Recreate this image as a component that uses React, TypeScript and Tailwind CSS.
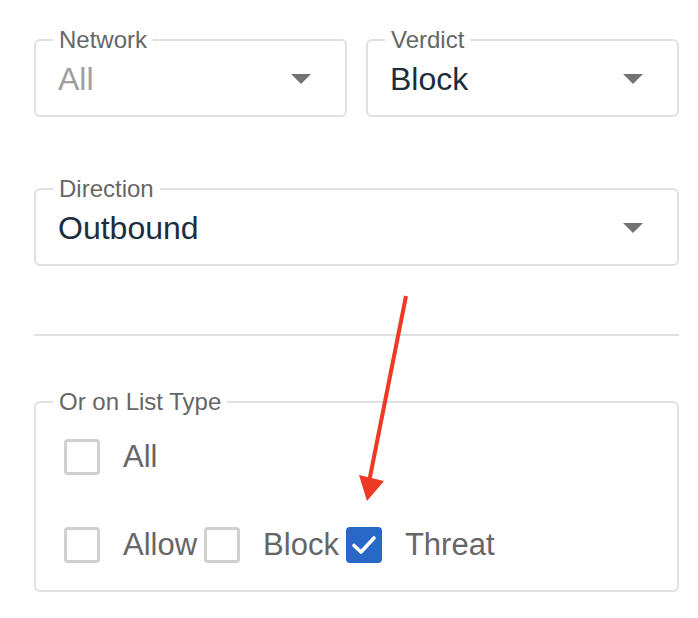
import React from 'react';

const font = { fontFamily: '"Liberation Sans", Arial, sans-serif' };

const Caret = () => (
  <svg width="20" height="10" viewBox="0 0 20 10" className="shrink-0">
    <polygon points="0,0 20,0 10,10" fill="#737373" />
  </svg>
);

const SelectField = ({ label, value, placeholder }: { label: string; value: string; placeholder?: boolean }) => (
  <fieldset className="h-[90px] min-w-0 rounded-[6px] border-2 border-[#e0e0e0] p-0">
    <legend className="ml-[17px] px-[6px] text-[24px] leading-[26px] text-[#666]">{label}</legend>
    <div className="mt-[7px] flex h-[38px] items-center justify-between pl-[22px] pr-[34px]">
      <span className={`text-[32px] leading-[38px] ${placeholder ? 'text-[#9e9e9e]' : 'text-[#1c2d3b]'}`}>{value}</span>
      <Caret />
    </div>
  </fieldset>
);

const Check = ({ label, checked }: { label: string; checked?: boolean }) => (
  <label className="flex items-center">
    {checked ? (
      <span className="flex h-[36px] w-[36px] items-center justify-center rounded-[4px] bg-[#2869c8]">
        <svg width="26" height="22" viewBox="0 0 26 22">
          <path d="M3 11.5 L10 18 L23 4" fill="none" stroke="white" strokeWidth="3.6" strokeLinecap="round" strokeLinejoin="round" />
        </svg>
      </span>
    ) : (
      <span className="h-[36px] w-[36px] rounded-[4px] border-[3px] border-[#d0d0d0] bg-white" />
    )}
    <span className="ml-[23px] text-[31px] leading-[36px] text-[#666]">{label}</span>
  </label>
);

export default function App() {
  return (
    <div className="relative min-h-[618px] w-[698px] bg-white pl-[34px] pr-[19px] pt-[27px]" style={font}>
      <div className="grid grid-cols-2 gap-[19px]">
        <SelectField label="Network" value="All" placeholder />
        <SelectField label="Verdict" value="Block" />
      </div>

      <div className="mt-[59px]">
        <SelectField label="Direction" value="Outbound" />
      </div>

      <hr className="mt-[68px] border-t-2 border-[#e0e0e0]" />

      <fieldset className="mt-[53px] h-[203px] rounded-[6px] border-2 border-[#e0e0e0] p-0">
        <legend className="ml-[17px] px-[6px] text-[24px] leading-[26px] text-[#666]">Or on List Type</legend>
        <div className="flex flex-col gap-[52px] pl-[28px] pt-[24px]">
          <Check label="All" />
          <div className="flex items-center gap-[7px]">
            <Check label="Allow" />
            <Check label="Block" />
            <Check label="Threat" checked />
          </div>
        </div>
      </fieldset>

      <svg className="pointer-events-none absolute left-0 top-0" width="698" height="618">
        <line x1="406" y1="296" x2="369" y2="482" stroke="#ee3a24" strokeWidth="4" />
        <polygon points="359,475 384,481 367,501" fill="#ee3a24" />
      </svg>
    </div>
  );
}
